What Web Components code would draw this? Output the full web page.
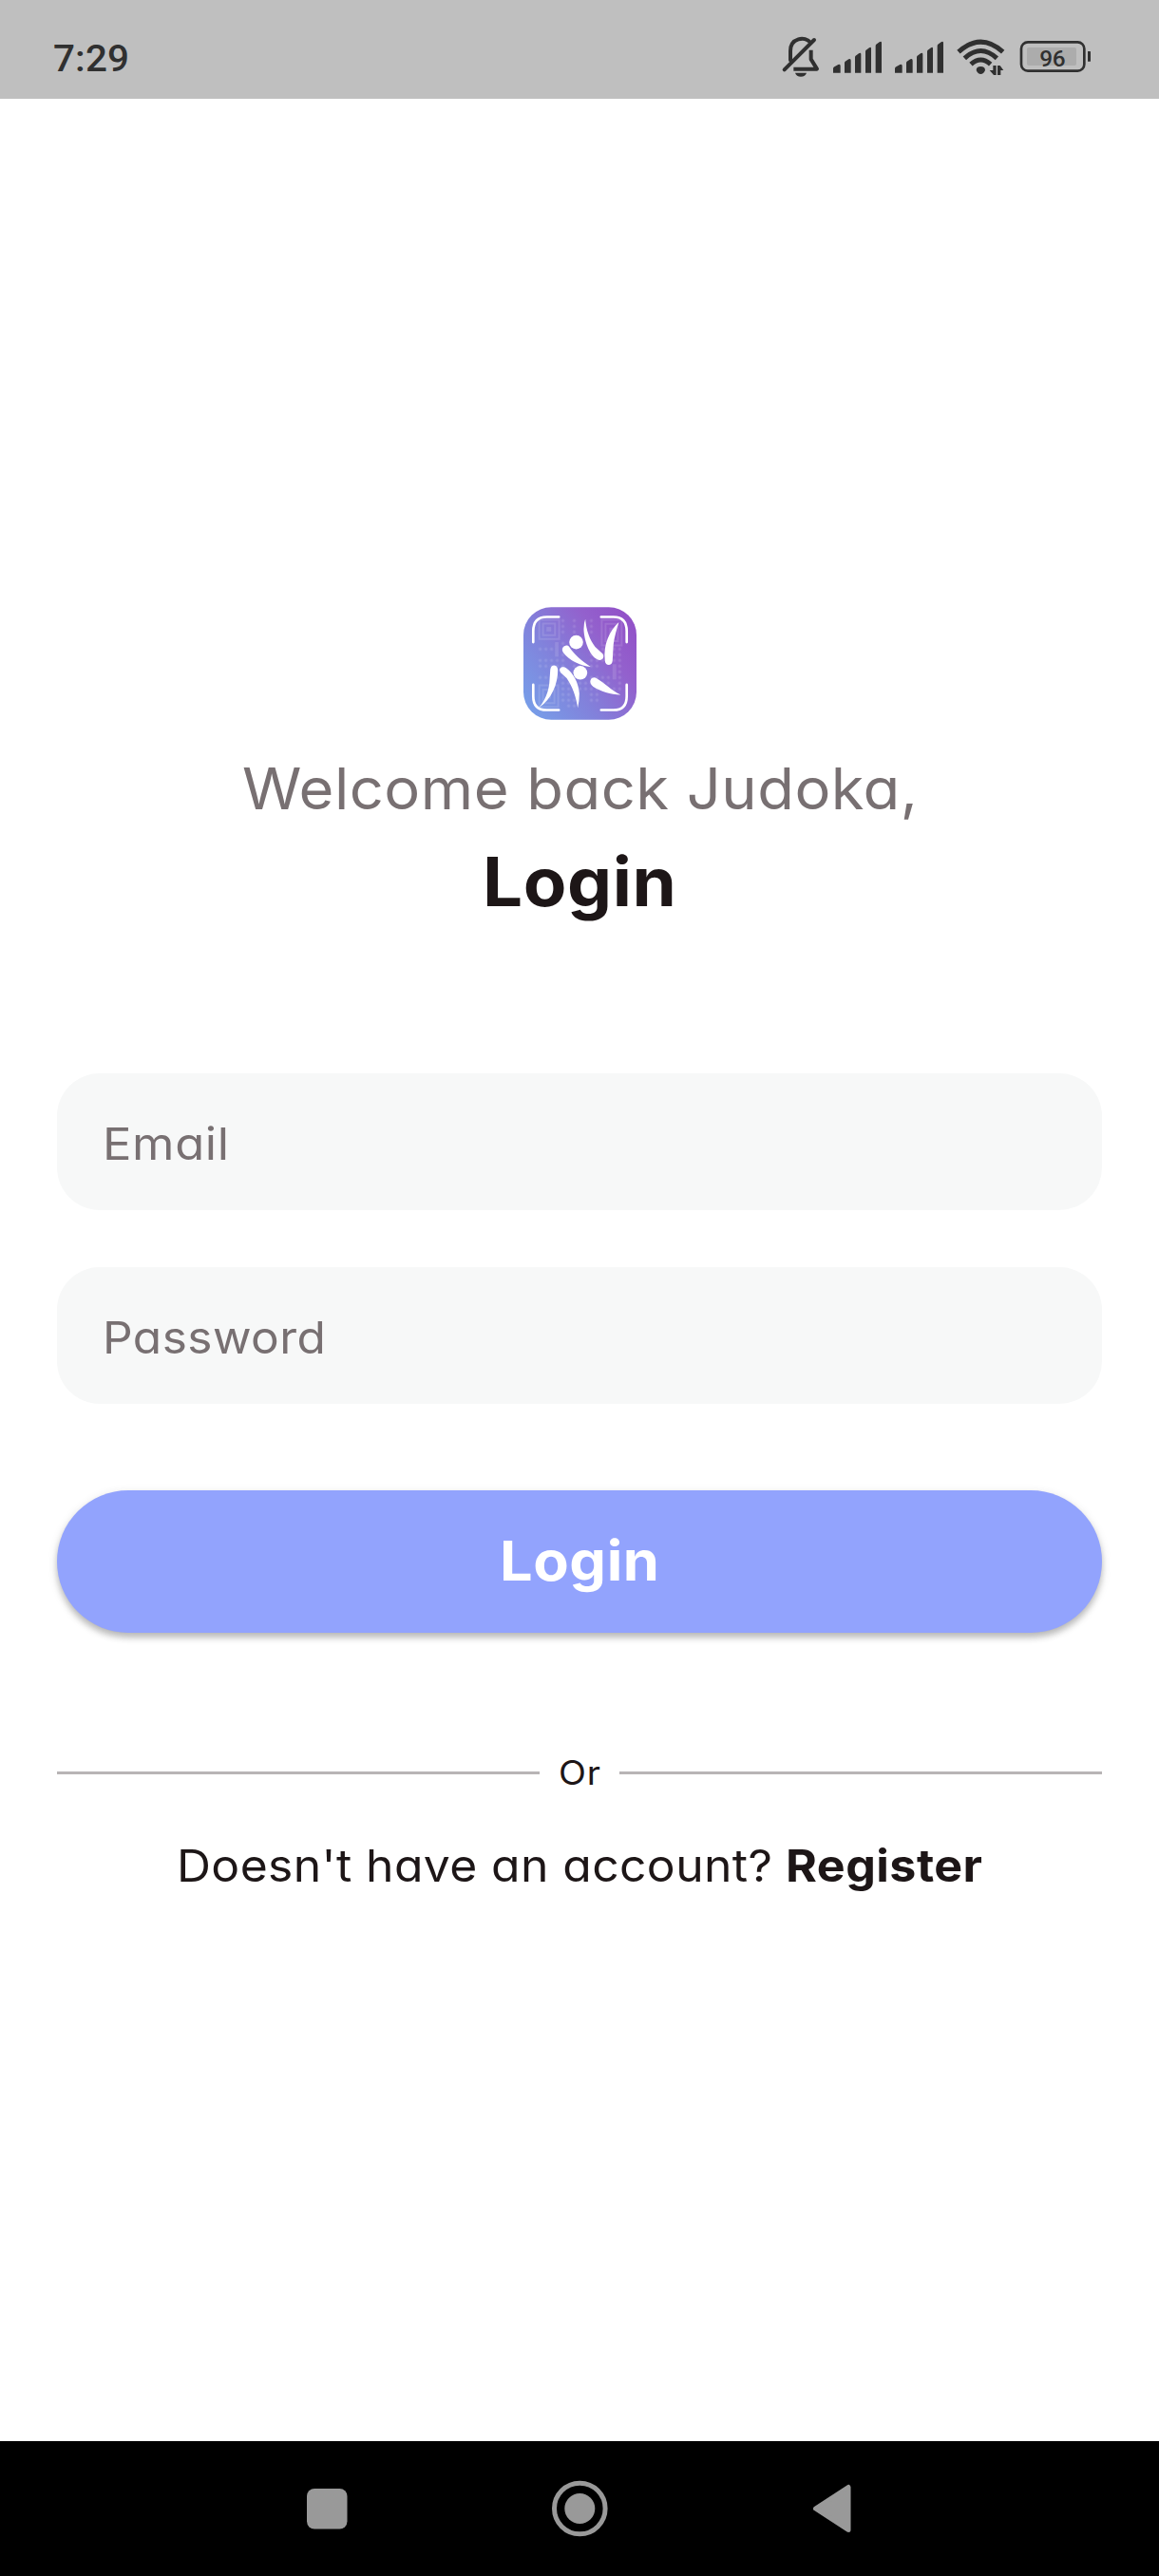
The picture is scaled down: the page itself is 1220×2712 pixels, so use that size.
<!DOCTYPE html>
<html lang="en">
<head>
<meta charset="utf-8">
<title>Login</title>
<style>
html,body{margin:0;padding:0;background:#fff}
body{font-family:Inter,"Open Sans",sans-serif;font-feature-settings:"cv11" 1}
</style>
</head>
<body>
<login-screen></login-screen>
<script>
const define=(name,html,setup)=>customElements.define(name,class extends HTMLElement{
  connectedCallback(){
    if(this.shadowRoot)return;
    const t=document.createElement('template');
    t.innerHTML=html;
    this.attachShadow({mode:'open'}).append(t.content.cloneNode(true));
    if(setup)setup(this,this.shadowRoot);
  }
});

// One line of text fitted to the advance width given in its "width" attribute:
// most of the difference widens the letters, the rest goes into the tracking.
define('fitted-text',`<style>:host{display:inline-block;white-space:pre;flex:none}span{display:inline-block;transform-origin:0 50%}</style><span></span>`,(el,root)=>{
  const s=root.querySelector('span'),w=+el.getAttribute('width');
  s.textContent=el.getAttribute('text');
  el.style.width=w+'px';
  const natural=s.getBoundingClientRect().width;
  const k=1+(w/natural-1)*.8;
  s.style.letterSpacing=(w/k-natural)/(s.textContent.length-1)+'px';
  s.style.transform=`scaleX(${k})`;
});

define('status-bar',`<style>
:host{display:flex;height:104px;background:#bfbfbf;color:#303030;box-sizing:border-box;padding:21px 72px 0 56px;justify-content:space-between;font-family:Roboto,sans-serif}
.time{font-size:39.5px;font-weight:500;line-height:82px}
svg{display:block;width:326px;height:83px}
</style>
<fitted-text class="time" width="80" text="7:29"></fitted-text>
<svg viewBox="66 3 978 249" fill="#303030">
<g fill="none" stroke="#303030" stroke-width="12" stroke-linecap="round" stroke-linejoin="round">
<path d="M77 160L171 66"/><path d="M96 130V101C96 60 142 52 160 75"/><path d="M161 98V127L180 158H106" stroke-linecap="butt"/>
</g>
<path d="M111 170H147Q143 182 129 182Q115 182 111 170Z"/>
<g id="b"><path d="M231 170V157Q231 153 235 151L247 144Q254 141 254 148V170Z"/><path d="M267 170V139Q267 135 271 133L280 127Q287 124 287 131V170Z"/><path d="M300 170V121Q300 117 304 115L312 109Q319 105 319 112V170Z"/><path d="M333 170V103Q333 99 337 97L345 91Q351 87 351 94V170Z"/><path d="M365 170V85Q365 81 369 79L377 73Q384 69 384 76V170Z"/></g>
<use href="#b" x="195"/>
<g fill="none" stroke="#303030" stroke-width="15"><path d="M627 104Q697 41 767 104"/><path d="M646 124Q697 77 748 124"/><path d="M666 143Q697 115 728 143"/></g>
<path d="M683 162Q683 150 697 150Q711 150 711 162Q706 174 697 174Q688 174 683 162Z"/>
<path d="M736 147H746V177H738L725 162H736ZM750 177V147H758L769 162H760V177Z"/>
<rect x="825" y="73" width="199" height="91" rx="21" fill="none" stroke="#303030" stroke-width="8"/>
<rect x="843" y="90" width="156" height="57" rx="6" fill="#acacac"/>
<path d="M1035 102H1041Q1047 102 1047 108V128Q1047 134 1041 134H1035Z"/>
<text x="924" y="148.500" text-anchor="middle" font-family="Roboto" font-weight="500" font-size="73" textLength="82">96</text>
</svg>`);

define('judo-logo',`<style>:host{display:block;width:119px;height:119px}svg{display:block;width:100%;height:100%}</style>
<svg viewBox="30 27 358 357">
<defs><linearGradient id="g" x1="0" y1=".9" x2="1" y2=".2"><stop offset="0" stop-color="#769fe9"/><stop offset=".4" stop-color="#8281db"/><stop offset=".75" stop-color="#9361cd"/><stop offset="1" stop-color="#9252c8"/></linearGradient>
<pattern id="d" width="18" height="18" patternUnits="userSpaceOnUse" x="146" y="61"><circle cx="9" cy="9" r="5" fill="#fff"/></pattern></defs>
<rect x="30" y="27" width="358" height="357" rx="88" fill="url(#g)"/>
<g opacity=".12"><g fill="none" stroke="#fff" stroke-width="6"><path d="M80 67H143V128H80ZM92 79H130V116H92ZM278 67H341V148H278ZM290 80H329V135H290ZM80 275H140V343H80ZM92 288H128V331H92Z"/></g><g fill="#fff"><rect x="103" y="90" width="15" height="14"/><rect x="103" y="300" width="14" height="17"/><rect x="302" y="92" width="16" height="28"/><rect x="130" y="138" width="11" height="46"/><rect x="312" y="208" width="12" height="48"/></g>
<path fill="url(#d)" d="M146 61h18v54h-18zM182 61h18v54h-18zM236 61h18v54h-18zM74 151h54v18H74zM74 187h72v36H74zM146 133h18v90h-18zM74 241h72v18H74zM182 187h36v54h-36zM236 169h36v54h-36zM272 151h72v54h-72zM236 241h36v90h-36zM146 241h36v90h-36zM182 259h54v36h-54zM164 313h36v36h-36zM272 241h36v36h-36zM326 205h18v72h-18zM236 313h36v18h-36zM290 277h54v18h-54z"/></g>
<g fill="none" stroke="#fff" stroke-width="8" stroke-linecap="round"><path d="M61 138V103Q61 58 104 58H142"/><path d="M276 58H315Q357 58 357 103V138"/><path d="M61 273V309Q61 353 104 353H142"/><path d="M276 353H315Q357 353 357 309V273"/></g>
<g fill="#fff"><circle cx="197" cy="138" r="22"/><circle cx="210" cy="235" r="22"/>
<path d="M226 65C229 102 240 130 257 153L280 174C290 187 277 200 264 193C238 181 221 128 221 96Q221 77 226 65Z"/>
<path d="M332 75C325 98 318 122 315 145L312 197C310 215 289 213 288 197C282 145 304 100 332 75Z"/>
<path d="M175 153C188 174 213 197 243 216C211 213 175 197 156 171C146 156 165 141 175 153Z"/>
<path d="M139 225C139 270 120 319 78 346C98 325 109 296 112 268L115 225C117 207 137 208 139 225Z"/>
<path d="M167 221C187 235 205 267 207 300Q207 325 202 346C197 314 187 281 167 252L148 235C138 220 153 211 167 221Z"/>
<path d="M261 252C286 267 306 288 338 305C306 303 274 294 251 279C231 263 247 244 261 252Z"/></g>
</svg>`);

define('page-header',`<style>
:host{display:flex;flex-direction:column;align-items:center}
.w{margin-top:26px;font-size:60px;line-height:92px;color:#787072}
.h{font-size:71px;line-height:104px;font-weight:700;color:#1d1617}
</style><judo-logo></judo-logo>
<fitted-text class="w" width="711" text="Welcome back Judoka,"></fitted-text>
<fitted-text class="h" width="204" text="Login"></fitted-text>`);

define('text-field',`<style>:host{display:flex;height:144px;box-sizing:border-box;padding:3px 48px 0;border-radius:45px;background:#f7f8f8;color:#787072;font-size:47px;line-height:142px}</style><slot></slot>`);

define('primary-button',`<style>:host{display:flex;justify-content:center;height:150px;border-radius:75px;background:#92a3fd;color:#fff;font-size:58px;font-weight:700;line-height:148px;box-shadow:0 3px 3px -5px rgba(0,0,0,.2),0 5px 6px rgba(0,0,0,.2),0 3px 11px rgba(0,0,0,.12)}</style><slot></slot>`);

define('or-divider',`<style>:host{display:flex;align-items:center;height:54px;color:#1d1617;font-size:35px;line-height:54px}i{flex:1;height:3px;background:#b8b4b5}fitted-text{margin:0 20px}</style><i></i><fitted-text width="44" text="Or"></fitted-text><i></i>`);

define('register-prompt',`<style>:host{display:flex;justify-content:center;gap:14px;color:#1d1617;font-size:47px;line-height:70px}b{font-weight:700;display:flex}</style><fitted-text width="627" text="Doesn't have an account?"></fitted-text><b><fitted-text width="207" text="Register"></fitted-text></b>`);

define('nav-bar',`<style>:host{display:block;height:142px;background:#000}svg{display:block}</style>
<svg width="1220" height="142" fill="#999"><rect x="323" y="50" width="42.500" height="42.500" rx="8"/><circle cx="610.300" cy="71" r="26.800" fill="none" stroke="#999" stroke-width="5"/><circle cx="610.300" cy="71" r="16"/><path d="M858.500 71L893 48.500V93.500Z" stroke="#999" stroke-width="5" stroke-linejoin="round"/></svg>`);

define('login-screen',`<style>
:host{display:flex;flex-direction:column;width:1220px;height:2712px;background:#fff}
main{flex:1;padding:535px 60px 0;display:flex;flex-direction:column}
.fields{display:flex;flex-direction:column;gap:60px;margin-top:150px}
primary-button{margin-top:91px}or-divider{margin-top:120px}register-prompt{margin-top:36px}
</style>
<status-bar></status-bar>
<main><page-header></page-header>
<div class="fields"><text-field><fitted-text width="133" text="Email"></fitted-text></text-field><text-field><fitted-text width="235" text="Password"></fitted-text></text-field></div>
<primary-button><fitted-text width="168" text="Login"></fitted-text></primary-button>
<or-divider></or-divider><register-prompt></register-prompt></main>
<nav-bar></nav-bar>`);
</script>
</body>
</html>
